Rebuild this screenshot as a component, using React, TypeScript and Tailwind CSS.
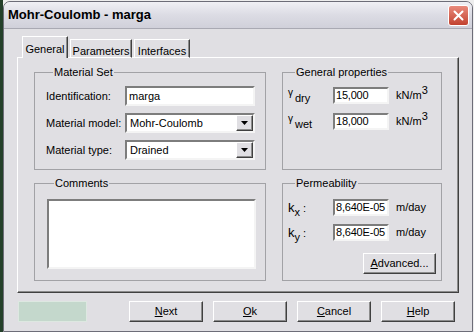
import React from 'react';

const sunken =
  'bg-white border-2 border-t-[#7d7d7d] border-l-[#7d7d7d] border-r-[#f4f4f4] border-b-[#f4f4f4]';
const raised =
  'bg-[#e0dfe3] border border-t-white border-l-white border-r-[#404040] border-b-[#404040] shadow-[inset_-1px_-1px_0_#8c8c8c]';

function Arrow() {
  return (
    <svg width="7" height="4" viewBox="0 0 7 4">
      <path d="M0 0h7L3.5 4z" fill="#000" />
    </svg>
  );
}

function Combo({ value }: { value: string }) {
  return (
    <div className={`${sunken} flex h-[20px] w-[130px] items-stretch`}>
      <span className="flex flex-1 items-center pl-[3px] text-[11px]">{value}</span>
      <span className={`${raised} flex w-[17px] items-center justify-center`}>
        <Arrow />
      </span>
    </div>
  );
}

function Group({ title, className, children }: { title: string; className: string; children: React.ReactNode }) {
  return (
    <fieldset className={`border border-[#a2a2a6] ${className}`}>
      <legend className="ml-[7px] px-[1px] text-[11px] leading-[13px]">{title}</legend>
      {children}
    </fieldset>
  );
}

function Btn({ children, className }: { children: React.ReactNode; className: string }) {
  return (
    <button className={`${raised} flex h-[21px] items-center justify-center text-[11px] ${className}`}>
      {children}
    </button>
  );
}

function Num({ value }: { value: string }) {
  return (
    <div
      className={`${sunken} flex h-[17px] w-[56px] items-center overflow-hidden whitespace-nowrap pl-[1px] tracking-[-0.2px]`}
    >
      {value}
    </div>
  );
}

export default function App() {
  return (
    <div className="flex h-[332px] w-[474px] bg-[#eeeeee] font-['Liberation_Sans',Arial,sans-serif] text-black">
      <div className="w-[3px] bg-[#24402a]" />
      <div className="mt-[1px] flex h-[331px] w-[470px] flex-col rounded-t-[7px] border border-[#6d6d78] bg-[#e0dfe3]">
        {/* title bar */}
        <div className="flex h-[27px] items-center justify-between rounded-t-[6px] border-b border-[#a9a9b3] bg-gradient-to-b from-[#f0f0f5] via-[#dcdce4] to-[#d0d0da] pl-[4px] pr-[3px]">
          <span className="text-[13px] font-bold">Mohr-Coulomb - marga</span>
          <span className="flex h-[21px] w-[21px] items-center justify-center rounded-[3px] border border-white bg-gradient-to-b from-[#e98a7c] to-[#c2412f]">
            <svg width="11" height="11" viewBox="0 0 11 11">
              <path d="M1.5 1.5l8 8M9.5 1.5l-8 8" stroke="#fff" strokeWidth="2" strokeLinecap="round" />
            </svg>
          </span>
        </div>

        <div className="flex flex-col px-[13px] pt-[7px]">
          {/* tabs */}
          <div className="relative z-10 -mb-px flex h-[22px] items-end pl-[5px] text-[11px]">
            <div className="flex h-[22px] w-[46px] items-start justify-center border-l border-t border-r border-l-white border-t-white border-r-[#404040] bg-[#e0dfe3] pt-[4px] shadow-[inset_-1px_0_0_#8c8c8c]">
              General
            </div>
            <div className="ml-[2px] flex h-[19px] w-[62px] items-start justify-center border-l border-t border-r border-l-white border-t-white border-r-[#404040] border-b border-b-white pt-[3px] shadow-[inset_-1px_0_0_#8c8c8c]">
              Parameters
            </div>
            <div className="ml-[2px] flex h-[19px] w-[56px] items-start justify-center border-l border-t border-r border-l-white border-t-white border-r-[#404040] border-b border-b-white pt-[3px] shadow-[inset_-1px_0_0_#8c8c8c]">
              Interfaces
            </div>
          </div>

          {/* panel */}
          <div className="h-[236px] border border-l-white border-t-white border-r-[#404040] border-b-[#404040] pl-[16px] pt-[8px] shadow-[inset_-1px_-1px_0_#8c8c8c]">
            <div className="grid grid-cols-[232px_160px] gap-x-[16px] gap-y-[7px]">
              <Group title="Material Set" className="h-[104px] pl-[11px]">
                <div className="mt-[7px] flex flex-col gap-[7px] text-[11px]">
                  <div className="flex items-center">
                    <span className="w-[79px]">Identification:</span>
                    <div className={`${sunken} flex h-[20px] w-[130px] items-center pl-[2px]`}>marga</div>
                  </div>
                  <div className="flex items-center">
                    <span className="w-[79px]">Material model:</span>
                    <Combo value="Mohr-Coulomb" />
                  </div>
                  <div className="flex items-center">
                    <span className="w-[79px]">Material type:</span>
                    <Combo value="Drained" />
                  </div>
                </div>
              </Group>

              <Group title="General properties" className="h-[104px] pl-[5px]">
                <div className="mt-[8px] flex flex-col gap-[9px] text-[11px]">
                  <div className="flex items-center">
                    <span className="w-[45px] leading-none">
                      <span className="relative -top-[3px] text-[10px]">γ</span>
                      <span className="relative top-[3px] ml-[2px]">dry</span>
                    </span>
                    <Num value="15,000" />
                    <span className="ml-[7px]">
                      kN/m<span className="relative -top-[5px] text-[11px]">3</span>
                    </span>
                  </div>
                  <div className="flex items-center">
                    <span className="w-[45px] leading-none">
                      <span className="relative -top-[3px] text-[10px]">γ</span>
                      <span className="relative top-[3px] ml-[2px]">wet</span>
                    </span>
                    <Num value="18,000" />
                    <span className="ml-[7px]">
                      kN/m<span className="relative -top-[5px] text-[11px]">3</span>
                    </span>
                  </div>
                </div>
              </Group>

              <Group title="Comments" className="h-[104px] pl-[12px]">
                <div className={`${sunken} mt-[9px] h-[70px] w-[209px]`} />
              </Group>

              <Group title="Permeability" className="h-[104px] pl-[5px] pr-[5px]">
                <div className="mt-[9px] flex flex-col gap-[8px] text-[11px]">
                  <div className="flex items-center">
                    <span className="w-[45px] leading-none">
                      <span className="text-[13px]">k</span>
                      <span className="relative top-[4px]">x</span> :
                    </span>
                    <Num value="8,640E-05" />
                    <span className="ml-[7px]">m/day</span>
                  </div>
                  <div className="flex items-center">
                    <span className="w-[45px] leading-none">
                      <span className="text-[13px]">k</span>
                      <span className="relative top-[4px]">y</span> :
                    </span>
                    <Num value="8,640E-05" />
                    <span className="ml-[7px]">m/day</span>
                  </div>
                </div>
                <div className="mt-[12px] flex justify-end">
                  <Btn className="h-[20px] w-[73px]">
                    <u>A</u>dvanced...
                  </Btn>
                </div>
              </Group>
            </div>
          </div>

          {/* bottom buttons */}
          <div className="mt-[8px] flex h-[21px]">
            <div className="ml-[1px] h-[21px] w-[69px] border border-[#dde8e1] bg-[#c4d8cc]" />
            <Btn className="ml-[42px] w-[74px]">
              <u>N</u>ext
            </Btn>
            <Btn className="ml-[10px] w-[74px]">
              <u>O</u>k
            </Btn>
            <Btn className="ml-[10px] w-[74px]">
              <u>C</u>ancel
            </Btn>
            <Btn className="ml-[10px] w-[74px]">
              <u>H</u>elp
            </Btn>
          </div>
        </div>
      </div>
    </div>
  );
}
